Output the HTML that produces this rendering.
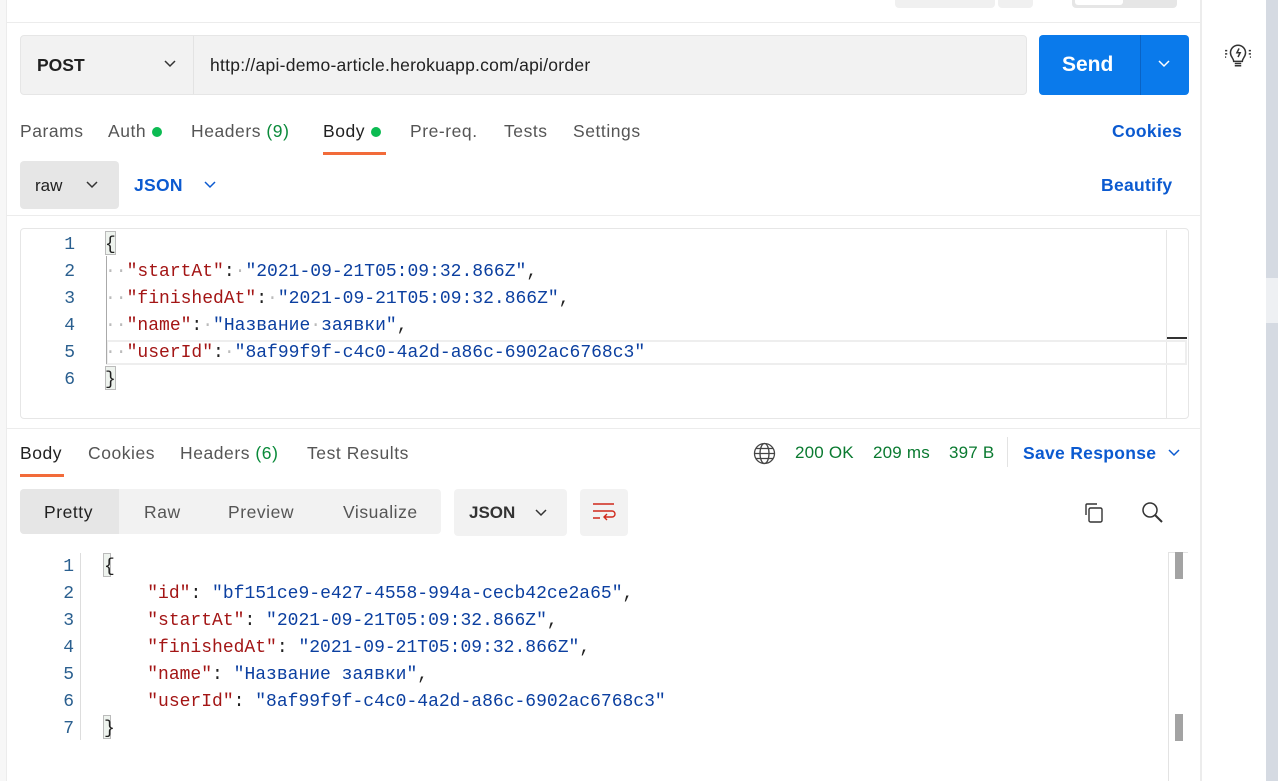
<!DOCTYPE html>
<html><head><meta charset="utf-8"><style>
*{box-sizing:border-box;margin:0;padding:0}
body{width:1278px;height:781px;overflow:hidden;background:#fff;font-family:"Liberation Sans",sans-serif;position:relative;color:#212121}
.a{position:absolute}
.t{font-size:17.5px;letter-spacing:0.55px;color:#555;white-space:nowrap}
.b{color:#0b5ad0;font-weight:bold;font-size:17.5px;letter-spacing:0.3px;white-space:nowrap}
.mono{font-family:"Liberation Mono",monospace;font-size:18px;white-space:pre}
.ln{color:#2a5f8f;text-align:right;width:30px}
.k{color:#a31515}.s{color:#0b3fa0}.d{color:#bbb}
.dot{width:10px;height:10px;border-radius:50%;background:#0cbb52;display:inline-block}
.brace{border:1px solid #bbb;background:#eef3ee;width:11px;height:24px}
</style></head><body>
<div class="a" style="left:0;top:0;width:7px;height:781px;background:#f7f7f7;border-right:1px solid #ececec"></div>
<div class="a" style="left:895px;top:0;width:100px;height:8px;background:#f0f0f0;border-radius:0 0 4px 4px"></div>
<div class="a" style="left:998px;top:0;width:35px;height:8px;background:#f0f0f0;border-radius:0 0 4px 4px"></div>
<div class="a" style="left:1072px;top:0;width:105px;height:8px;background:#e6e6e6;border-radius:0 0 4px 4px"></div>
<div class="a" style="left:1075px;top:0;width:48px;height:5px;background:#fff;border-radius:0 0 3px 3px"></div>
<div class="a" style="left:7px;top:22px;width:1193px;height:1px;background:#ececec"></div>
<div class="a" style="left:1200px;top:0;width:2px;height:781px;background:#ececec"></div>
<div class="a" style="left:1266px;top:0;width:12px;height:781px;background:#d5dae2"></div>
<div class="a" style="left:1266px;top:278px;width:12px;height:45px;background:#eef0f3"></div>
<svg class="a" style="left:1224px;top:42px" width="28" height="28" viewBox="0 0 26 26" fill="none" stroke="#333" stroke-width="1.4"><path d="M9 18c0-3-3-4-3-8a7 7 0 0 1 14 0c0 4-3 5-3 8z"/><path d="M10 20h6M10 22h6"/><path d="M14 6l-2 4h3l-2 4"/><path d="M1 8h2M1 11h2M1 14h1M23 8h2M23 11h2M24 14h1"/></svg>
<div class="a" style="left:20px;top:35px;width:1007px;height:60px;background:#f2f2f2;border:1px solid #e6e6e6;border-radius:4px"></div>
<div class="a" style="left:193px;top:36px;width:1px;height:58px;background:#e3e3e3"></div>
<div class="a" style="left:37px;top:55px;font-size:17.5px;font-weight:bold;color:#212121">POST</div>
<svg class="a" style="left:163px;top:59px" width="14" height="10"><path d="M2 2l5 5 5-5" stroke="#333" stroke-width="1.5" fill="none"/></svg>
<div class="a" style="left:210px;top:55px;font-size:17.5px;letter-spacing:0.25px;color:#212121">http://api-demo-article.herokuapp.com/api/order</div>
<div class="a" style="left:1039px;top:35px;width:150px;height:60px;background:#0a7aeb;border-radius:4px"></div>
<div class="a" style="left:1140px;top:35px;width:1px;height:60px;background:#0a63c4"></div>
<div class="a" style="left:1062px;top:53px;font-size:21px;font-weight:bold;color:#fff">Send</div>
<svg class="a" style="left:1157px;top:59px" width="14" height="10"><path d="M2 2l5 5 5-5" stroke="#fff" stroke-width="1.5" fill="none"/></svg>
<div class="a t" style="left:20px;top:121px">Params</div>
<div class="a t" style="left:108px;top:121px">Auth <span class="dot"></span></div>
<div class="a t" style="left:191px;top:121px">Headers <span style="color:#0a8a3a">(9)</span></div>
<div class="a t" style="left:323px;top:121px;color:#212121">Body <span class="dot"></span></div>
<div class="a" style="left:323px;top:152px;width:63px;height:3px;background:#f26b3a"></div>
<div class="a t" style="left:410px;top:121px">Pre-req.</div>
<div class="a t" style="left:504px;top:121px">Tests</div>
<div class="a t" style="left:573px;top:121px">Settings</div>
<div class="a b" style="left:1112px;top:121px">Cookies</div>
<div class="a" style="left:20px;top:161px;width:99px;height:48px;background:#e6e6e6;border-radius:4px"></div>
<div class="a" style="left:35px;top:176px;font-size:17px;color:#212121">raw</div>
<svg class="a" style="left:85px;top:180px" width="14" height="10"><path d="M2 2l5 5 5-5" stroke="#333" stroke-width="1.5" fill="none"/></svg>
<div class="a b" style="left:134px;top:175px">JSON</div>
<svg class="a" style="left:203px;top:180px" width="14" height="10"><path d="M2 2l5 5 5-5" stroke="#0b5ad0" stroke-width="1.5" fill="none"/></svg>
<div class="a b" style="left:1101px;top:175px">Beautify</div>
<div class="a" style="left:7px;top:215px;width:1193px;height:1px;background:#ececec"></div>
<div class="a" style="left:20px;top:228px;width:1169px;height:191px;border:1px solid #e6e6e6;border-radius:4px"></div>
<div class="a" style="left:1166px;top:230px;width:1px;height:188px;background:#e6e6e6"></div>
<div class="a" style="left:106px;top:340px;width:1081px;height:25px;border:2px solid #eeeeee"></div>
<div class="a" style="left:1167px;top:337px;width:20px;height:2px;background:#333"></div>
<div class="a" style="left:106px;top:256px;width:1px;height:108px;background:#aaa"></div>
<div class="a brace" style="left:105px;top:231px"></div>
<div class="a brace" style="left:105px;top:366px"></div>
<div class="a mono" style="left:45px;top:232px;line-height:27px"><div class="ln">1</div><div class="ln">2</div><div class="ln">3</div><div class="ln">4</div><div class="ln">5</div><div class="ln">6</div></div>
<div class="a mono" style="left:105px;top:232px;line-height:27px">{
<span class="d">··</span><span class="k">"startAt"</span>:<span class="d">·</span><span class="s">"2021-09-21T05:09:32.866Z"</span>,
<span class="d">··</span><span class="k">"finishedAt"</span>:<span class="d">·</span><span class="s">"2021-09-21T05:09:32.866Z"</span>,
<span class="d">··</span><span class="k">"name"</span>:<span class="d">·</span><span class="s">"Название<span class="d">·</span>заявки"</span>,
<span class="d">··</span><span class="k">"userId"</span>:<span class="d">·</span><span class="s">"8af99f9f-c4c0-4a2d-a86c-6902ac6768c3"</span>
}</div>
<div class="a" style="left:7px;top:428px;width:1193px;height:1px;background:#ececec"></div>
<div class="a t" style="left:20px;top:443px;color:#212121">Body</div>
<div class="a" style="left:20px;top:474px;width:44px;height:3px;background:#f26b3a"></div>
<div class="a t" style="left:88px;top:443px">Cookies</div>
<div class="a t" style="left:180px;top:443px">Headers <span style="color:#0a8a3a">(6)</span></div>
<div class="a t" style="left:307px;top:443px">Test Results</div>
<svg class="a" style="left:753px;top:442px" width="23" height="23" viewBox="0 0 23 23" fill="none" stroke="#444" stroke-width="1.3"><circle cx="11.5" cy="11.5" r="10"/><ellipse cx="11.5" cy="11.5" rx="4.5" ry="10"/><path d="M1.5 11.5h20M3 6.5h17M3 16.5h17"/></svg>
<div class="a t" style="left:795px;top:443px;color:#0a7a30;font-size:17px;letter-spacing:0.2px">200 OK</div>
<div class="a t" style="left:873px;top:443px;color:#0a7a30;font-size:17px;letter-spacing:0.2px">209 ms</div>
<div class="a t" style="left:949px;top:443px;color:#0a7a30;font-size:17px;letter-spacing:0.2px">397 B</div>
<div class="a" style="left:1007px;top:437px;width:1px;height:30px;background:#e3e3e3"></div>
<div class="a b" style="left:1023px;top:443px">Save Response</div>
<svg class="a" style="left:1167px;top:448px" width="14" height="10"><path d="M2 2l5 5 5-5" stroke="#0b5ad0" stroke-width="1.5" fill="none"/></svg>
<div class="a" style="left:20px;top:489px;width:421px;height:45px;background:#f2f2f2;border-radius:4px"></div>
<div class="a" style="left:20px;top:489px;width:99px;height:45px;background:#e6e6e6;border-radius:4px 0 0 4px"></div>
<div class="a t" style="left:44px;top:502px;color:#212121">Pretty</div>
<div class="a t" style="left:144px;top:502px">Raw</div>
<div class="a t" style="left:228px;top:502px">Preview</div>
<div class="a t" style="left:343px;top:502px">Visualize</div>
<div class="a" style="left:454px;top:489px;width:113px;height:47px;background:#f2f2f2;border-radius:4px"></div>
<div class="a" style="left:469px;top:503px;font-size:17px;font-weight:bold;color:#333">JSON</div>
<svg class="a" style="left:534px;top:508px" width="14" height="10"><path d="M2 2l5 5 5-5" stroke="#333" stroke-width="1.5" fill="none"/></svg>
<div class="a" style="left:580px;top:489px;width:48px;height:47px;background:#f2f2f2;border-radius:4px"></div>
<svg class="a" style="left:592px;top:501px" width="24" height="24" viewBox="0 0 24 24" fill="none" stroke="#d0281a" stroke-width="1.4"><path d="M1 3h21M1 10h19a3 3 0 0 1 0 6h-7M15 13l-3 3 3 3M1 17h7"/></svg>
<svg class="a" style="left:1081px;top:501px" width="24" height="24" viewBox="0 0 24 24" fill="none" stroke="#333" stroke-width="1.4"><path d="M5 14V4a1 1 0 0 1 1-1h10"/><rect x="8" y="7" width="13" height="14" rx="1.5"/></svg>
<svg class="a" style="left:1141px;top:501px" width="24" height="24" viewBox="0 0 24 24" fill="none" stroke="#333" stroke-width="1.5"><circle cx="9" cy="9" r="7"/><path d="M14 14l7 7" stroke-width="2"/></svg>
<div class="a" style="left:1168px;top:552px;width:1px;height:229px;background:#e3e3e3"></div>
<div class="a" style="left:1168px;top:552px;width:20px;height:1px;background:#e3e3e3"></div>
<div class="a" style="left:1175px;top:552px;width:8px;height:27px;background:#a3a3a3"></div>
<div class="a" style="left:1175px;top:714px;width:8px;height:27px;background:#a3a3a3"></div>
<div class="a" style="left:80px;top:553px;width:1px;height:187px;background:#ddd"></div>
<div class="a brace" style="left:103px;top:553px;width:8px"></div>
<div class="a brace" style="left:103px;top:715px;width:8px"></div>
<div class="a mono" style="left:44px;top:554px;line-height:27px"><div class="ln">1</div><div class="ln">2</div><div class="ln">3</div><div class="ln">4</div><div class="ln">5</div><div class="ln">6</div><div class="ln">7</div></div>
<div class="a mono" style="left:104px;top:554px;line-height:27px">{
    <span class="k">"id"</span>: <span class="s">"bf151ce9-e427-4558-994a-cecb42ce2a65"</span>,
    <span class="k">"startAt"</span>: <span class="s">"2021-09-21T05:09:32.866Z"</span>,
    <span class="k">"finishedAt"</span>: <span class="s">"2021-09-21T05:09:32.866Z"</span>,
    <span class="k">"name"</span>: <span class="s">"Название заявки"</span>,
    <span class="k">"userId"</span>: <span class="s">"8af99f9f-c4c0-4a2d-a86c-6902ac6768c3"</span>
}</div>
</body></html>
